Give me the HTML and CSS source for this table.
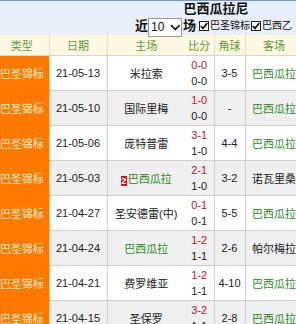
FILE: index.html
```html
<!DOCTYPE html>
<html lang="zh">
<head>
<meta charset="utf-8">
<title>巴西瓜拉尼 近期战绩</title>
<link rel="stylesheet" href="styles.css">
</head>
<body>
<div class="wrap">
  <div class="title">
    <div class="team">巴西瓜拉尼</div>
    <div class="filter">
      <b class="big">近</b><span class="sel">10<svg class="chev" width="11" height="7" viewBox="0 0 11 7"><path d="M1 1 L5.5 5.5 L10 1" fill="none" stroke="#222" stroke-width="1.8"/></svg></span><b class="big">场</b>
      <span class="cb cb-first"><svg width="8" height="8" viewBox="0 0 8 8"><path d="M0.8 4 L3 6.3 L7.3 1" fill="none" stroke="#111" stroke-width="1.8"/></svg></span><span class="lab">巴圣锦标</span><span class="cb"><svg width="8" height="8" viewBox="0 0 8 8"><path d="M0.8 4 L3 6.3 L7.3 1" fill="none" stroke="#111" stroke-width="1.8"/></svg></span><span class="lab">巴西乙</span>
    </div>
  </div>
  <table class="games">
    <colgroup>
      <col class="c-type"><col class="c-date"><col class="c-home"><col class="c-score"><col class="c-corner"><col class="c-away">
    </colgroup>
    <thead>
      <tr><th class="t-type">类型</th><th class="sep">日期</th><th>主场</th><th class="sep">比分</th><th class="sep">角球</th><th>客场</th></tr>
    </thead>
    <tbody>
      <tr><td class="type">巴圣锦标</td><td class="date">21-05-13</td><td class="home">米拉索</td><td class="score"><span class="ft">0-0</span><span class="ht">0-0</span></td><td class="corner">3-5</td><td class="away win">巴西瓜拉</td></tr>
      <tr class="alt"><td class="type">巴圣锦标</td><td class="date">21-05-10</td><td class="home">国际里梅</td><td class="score"><span class="ft">1-0</span><span class="ht">0-0</span></td><td class="corner">-</td><td class="away win">巴西瓜拉</td></tr>
      <tr><td class="type">巴圣锦标</td><td class="date">21-05-06</td><td class="home">庞特普雷</td><td class="score"><span class="ft">3-1</span><span class="ht">1-0</span></td><td class="corner">4-4</td><td class="away win">巴西瓜拉</td></tr>
      <tr class="alt"><td class="type">巴圣锦标</td><td class="date">21-05-03</td><td class="home win"><span class="badge">2</span>巴西瓜拉</td><td class="score"><span class="ft">2-1</span><span class="ht">1-0</span></td><td class="corner">3-2</td><td class="away">诺瓦里桑</td></tr>
      <tr><td class="type">巴圣锦标</td><td class="date">21-04-27</td><td class="home">圣安德雷(中)</td><td class="score"><span class="ft">0-1</span><span class="ht">0-1</span></td><td class="corner">5-5</td><td class="away win">巴西瓜拉</td></tr>
      <tr class="alt"><td class="type">巴圣锦标</td><td class="date">21-04-24</td><td class="home win">巴西瓜拉</td><td class="score"><span class="ft">1-2</span><span class="ht">1-1</span></td><td class="corner">2-6</td><td class="away">帕尔梅拉</td></tr>
      <tr><td class="type">巴圣锦标</td><td class="date">21-04-21</td><td class="home">费罗维亚</td><td class="score"><span class="ft">1-2</span><span class="ht">1-1</span></td><td class="corner">4-10</td><td class="away win">巴西瓜拉</td></tr>
      <tr class="alt"><td class="type">巴圣锦标</td><td class="date">21-04-15</td><td class="home">圣保罗</td><td class="score"><span class="ft">3-2</span><span class="ht">1-1</span></td><td class="corner">2-8</td><td class="away win">巴西瓜拉</td></tr>
    </tbody>
  </table>
</div>
</body>
</html>
```

FILE: styles.css
```css
html, body {
  margin: 0;
  padding: 0;
  background: #ffffff;
  overflow: hidden;
}
body {
  font-family: "Liberation Sans", "Noto Sans CJK SC", sans-serif;
  font-size: 11px;
  color: #222;
}
.wrap {
  width: 442px;
  margin-left: -5px;
}
.title {
  background: #e8eff8;
  border-top: 1px solid #6a9ccf;
  height: 34px;
  text-align: center;
}
.team {
  font-size: 13px;
  font-weight: bold;
  line-height: 16px;
  height: 16px;
  color: #111;
}
.filter {
  height: 18px;
  line-height: 18px;
  display: flex;
  justify-content: flex-start;
  align-items: center;
  padding-left: 140px;
  color: #111;
  white-space: nowrap;
}
.big {
  font-size: 13px;
  font-weight: bold;
}
.sel {
  display: inline-flex;
  align-items: center;
  box-sizing: border-box;
  flex: none;
  width: 34px;
  height: 19px;
  margin: 2px 1px 0 0;
  padding-left: 2px;
  border: 1px solid #9a9a9a;
  background: #fff;
  font-size: 12px;
  position: relative;
  z-index: 1;
}
.chev {
  margin-left: 6px;
}
.cb {
  display: inline-flex;
  align-items: center;
  justify-content: center;
  box-sizing: border-box;
  flex: none;
  width: 10px;
  height: 10px;
  border: 1px solid #222;
  background: #fff;
  margin-left: 1px;
  margin-right: 1px;
}
.cb-first {
  margin-left: 3px;
}
.lab {
  font-size: 10px;
  flex: none;
}
.games {
  border-collapse: collapse;
  table-layout: fixed;
  width: 308px;
}
.c-type { width: 54px; }
.c-date { width: 58px; }
.c-home { width: 78px; }
.c-score { width: 29px; }
.c-corner { width: 31px; }
.c-away { width: 58px; }
.games th {
  background: #fcf8e2;
  color: #5f9a40;
  font-weight: normal;
  font-size: 11px;
  height: 20px;
  padding: 0;
  border-bottom: 1px solid #d6d6d6;
  border-right: 1px solid #e0dccb;
  text-align: center;
}
.games th:nth-child(3) {
  border-right: none;
}
.games td {
  height: 34px;
  padding: 0;
  text-align: center;
  border-bottom: 1px solid #cfcfcf;
  border-right: 1px solid #cfcfcf;
  white-space: nowrap;
  overflow: hidden;
}
.games tr.alt td {
  background: #efefef;
}
.games td.type,
.games tr.alt td.type {
  background: #ff7800;
  color: #fff2cc;
  border-bottom-color: #ff7800;
  border-right-color: #d9d9d9;
}
.games td.home {
  border-right: none;
}
.score {
  line-height: 16px;
}
.score span {
  display: block;
}
.ft {
  color: #c8101e;
}
.ht {
  color: #222;
}
.win {
  color: #2b8a25;
}
.badge {
  display: inline-block;
  background: #e01010;
  color: #fff;
  font-size: 9px;
  font-weight: bold;
  line-height: 10px;
  width: 6px;
  height: 10px;
  vertical-align: -1px;
  margin-right: 1px;
}
```
